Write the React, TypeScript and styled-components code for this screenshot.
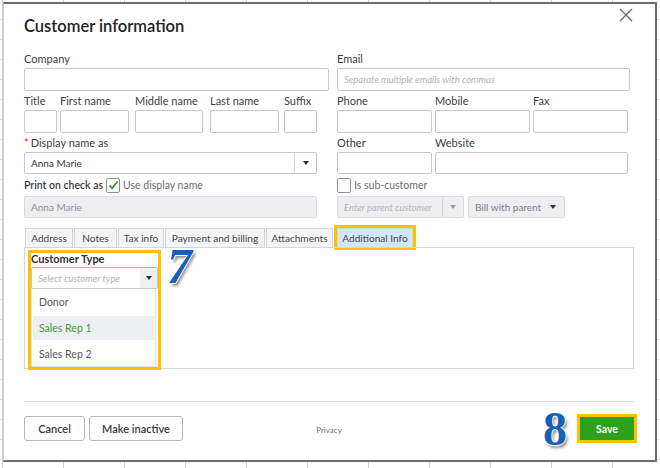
import React from 'react';
import styled, { createGlobalStyle } from 'styled-components';

const GlobalStyle = createGlobalStyle`
  html, body { margin: 0; padding: 0; }
  body {
    width: 660px;
    height: 468px;
    overflow: hidden;
    font-family: Lato, "Open Sans", sans-serif;
    background-color: #fff;
    background-image:
      repeating-linear-gradient(90deg, transparent 0, transparent 2px, #cfcfcf 2px, #cfcfcf 3px, transparent 3px, transparent 61px),
      repeating-linear-gradient(180deg, transparent 0, transparent 19px, #e0e0e0 19px, #e0e0e0 20px, transparent 20px, transparent 20px);
  }
`;

const Dialog = styled.div`
  box-sizing: border-box;
  width: 654px;
  height: 460px;
  margin: 2px 0 0 3px;
  background: #fff;
  border: 2px solid #6d6d6d;
  border-left: 1px solid #d0d0d0;
  padding: 4px 21px 0 20px;
  display: flex;
  flex-direction: column;
  color: #393a3d;
`;

const Header = styled.div`
  display: flex;
  justify-content: space-between;
  align-items: flex-start;
`;

const Title = styled.h1`
  margin: 7px 0 0;
  font-size: 16.5px;
  line-height: 22px;
  font-weight: 600;
  color: #222;
`;

const CloseButton = styled.button`
  width: 14px;
  height: 14px;
  padding: 0;
  margin-right: 1px;
  border: none;
  background: none;
  display: flex;
`;

const FormGrid = styled.div`
  display: grid;
  grid-template-columns: 305px 297px;
  column-gap: 8px;
  row-gap: 2px;
  margin-top: 14px;
`;

const Field = styled.div<{ $w: number }>`
  display: flex;
  flex-direction: column;
  width: ${p => p.$w}px;
`;

const FieldRow = styled.div<{ $gap?: number }>`
  display: flex;
  gap: ${p => p.$gap ?? 0}px;
`;

const NameRow = styled.div`
  display: grid;
  grid-template-columns: 36px 75px 75px 74px 33px;
`;

const Label = styled.label`
  font-size: 11px;
  line-height: 16px;
  height: 16px;
  margin-bottom: 1px;
  color: #404040;
  white-space: nowrap;
`;

const Required = styled.span`
  color: #d52b1e;
  margin-right: 2px;
`;

const Input = styled.div<{ $h?: number; $disabled?: boolean }>`
  box-sizing: border-box;
  height: ${p => p.$h ?? 23}px;
  border: 1px solid ${p => (p.$disabled ? '#d9dbde' : '#c6c8cc')};
  border-radius: 2px;
  background: ${p => (p.$disabled ? '#eceef1' : '#fff')};
  display: flex;
  align-items: center;
  padding-left: 6px;
  font-size: 10px;
  color: ${p => (p.$disabled ? '#8d9096' : '#393a3d')};
  overflow: hidden;
  white-space: nowrap;
`;

const Placeholder = styled.span<{ $size?: number }>`
  font-style: italic;
  color: #b0b2b6;
  font-size: ${p => p.$size ?? 9.5}px;
  flex: 1;
  overflow: hidden;
`;

const SelectBox = styled.div<{ $w: number; $disabled?: boolean; $focus?: boolean }>`
  box-sizing: border-box;
  width: ${p => p.$w}px;
  height: ${p => (p.$focus ? 23 : 22)}px;
  display: flex;
  align-items: stretch;
  border: 1px solid ${p => (p.$disabled ? '#d9dbde' : '#c6c8cc')};
  border-top-color: ${p => (p.$focus ? '#8fd18a' : p.$disabled ? '#d9dbde' : '#c6c8cc')};
  border-radius: 2px;
  background: ${p => (p.$disabled ? '#eceef1' : '#fff')};
  font-size: 10px;
  color: ${p => (p.$disabled ? '#7d8086' : '#393a3d')};
`;

const SelectValue = styled.div`
  flex: 1;
  display: flex;
  align-items: center;
  padding-left: 6px;
  overflow: hidden;
  white-space: nowrap;
`;

const ArrowCell = styled.div<{ $w: number; $divider?: boolean; $shade?: boolean }>`
  width: ${p => p.$w}px;
  display: flex;
  align-items: center;
  justify-content: center;
  border-left: ${p => (p.$divider ? '1px solid #d6d8dc' : 'none')};
  background: ${p => (p.$shade ? '#efeff0' : 'transparent')};
`;

const Caret = styled.span<{ $light?: boolean }>`
  width: 0;
  height: 0;
  border-left: 3.5px solid transparent;
  border-right: 3.5px solid transparent;
  border-top: 4px solid ${p => (p.$light ? '#9a9ca1' : '#2d2e31')};
`;

const CheckRow = styled.div`
  display: flex;
  align-items: center;
  gap: 3px;
  height: 18px;
  font-size: 10.5px;
  white-space: nowrap;
`;

const CheckLabel = styled.span<{ $strong?: boolean }>`
  color: ${p => (p.$strong ? '#393a3d' : '#6b6c72')};
  font-weight: ${p => (p.$strong ? 600 : 400)};
`;

const Checkbox = styled.span`
  box-sizing: border-box;
  width: 14px;
  height: 15px;
  border: 1px solid #8d9096;
  border-radius: 2px;
  background: #fff;
  display: flex;
  align-items: center;
  justify-content: center;
`;

const Tabs = styled.div`
  display: flex;
  align-items: flex-end;
  gap: 1px;
  margin-top: 10px;
  padding-left: 1px;
`;

const Tab = styled.div<{ $w: number; $active?: boolean }>`
  box-sizing: border-box;
  width: ${p => p.$w}px;
  height: 19px;
  display: flex;
  align-items: center;
  justify-content: center;
  border: 1px solid #d4d6da;
  border-bottom: none;
  background: ${p => (p.$active ? '#d3e6fa' : '#f3f4f6')};
  font-size: 10.1px;
  color: #45474b;
  white-space: nowrap;
  overflow: hidden;
  outline: ${p => (p.$active ? '3px solid #ffc000' : 'none')};
  margin-left: ${p => (p.$active ? 3 : 0)}px;
`;

const Panel = styled.div`
  box-sizing: border-box;
  height: 122px;
  flex-shrink: 0;
  border: 1px solid #d4d6da;
  display: flex;
  align-items: flex-start;
  padding: 2px 0 0 3px;
`;

const TypeBox = styled.div`
  box-sizing: border-box;
  width: 133px;
  height: 120px;
  border: 3px solid #ffc000;
  display: flex;
  flex-direction: column;
`;

const TypeLabel = styled.div`
  font-size: 11px;
  font-weight: 700;
  line-height: 12px;
  margin-bottom: 2px;
  color: #333;
`;

const OptionList = styled.div`
  box-sizing: border-box;
  width: 125px;
  display: flex;
  flex-direction: column;
  gap: 2px;
  padding: 1px 1px 0;
  border: 1px solid #e1e2e5;
  border-top: none;
`;

const Option = styled.div<{ $hover?: boolean }>`
  height: 24px;
  display: flex;
  align-items: center;
  padding-left: 6px;
  font-size: 10.5px;
  color: ${p => (p.$hover ? '#3c9a2f' : '#55575c')};
  background: ${p => (p.$hover ? '#eceef1' : 'transparent')};
`;

const StepNumber = styled.span<{ $italic?: boolean }>`
  font-family: "Liberation Serif", "DejaVu Serif", serif;
  font-weight: 700;
  font-style: ${p => (p.$italic ? 'italic' : 'normal')};
  font-size: ${p => (p.$italic ? 50 : 48)}px;
  line-height: ${p => (p.$italic ? '36px' : '25px')};
  height: ${p => (p.$italic ? 36 : 25)}px;
  margin: ${p => (p.$italic ? '-2px 0 0 6px' : '0')};
  color: #1760b3;
  text-shadow: 1px 0 0 #fff, -1px 0 0 #fff, 0 1px 0 #fff, 0 -1px 0 #fff, 2px 3px 3px rgba(0, 0, 0, 0.45);
`;

const Footer = styled.div`
  margin-top: 32px;
  border-top: 1px solid #dcdde0;
  padding-top: 14px;
  display: grid;
  grid-template-columns: 1fr auto 1fr;
  align-items: center;
`;

const ButtonGroup = styled.div<{ $end?: boolean }>`
  display: flex;
  align-items: center;
  gap: 4px;
  justify-content: ${p => (p.$end ? 'flex-end' : 'flex-start')};
`;

const Button = styled.button<{ $w: number }>`
  box-sizing: border-box;
  width: ${p => p.$w}px;
  height: 25px;
  border: 1px solid #b5b7bb;
  border-radius: 3px;
  background: #fff;
  font-family: inherit;
  font-size: 11px;
  font-weight: 600;
  color: #393a3d;
  padding: 0;
`;

const SaveButton = styled.button`
  width: 54px;
  height: 23px;
  border: none;
  background: #2ca01c;
  color: #fff;
  font-family: inherit;
  font-size: 10.5px;
  font-weight: 700;
  outline: 3px solid #ffc000;
  margin-left: 9px;
  padding: 0;
`;

const Privacy = styled.span`
  font-size: 8px;
  color: #6b6c72;
  margin-top: 3px;
`;

const CheckMark = () => (
  <svg width="11" height="10" viewBox="0 0 11 10">
    <path d="M1.5 5.5 L4.2 8.2 L9.5 1.5" fill="none" stroke="#2ca01c" strokeWidth="1.8" />
  </svg>
);

const nameFields: [string, number][] = [
  ['Title', 33],
  ['First name', 69],
  ['Middle name', 68],
  ['Last name', 69],
  ['Suffix', 33],
];

const tabs: [string, number][] = [
  ['Address', 48],
  ['Notes', 43],
  ['Tax info', 46],
  ['Payment and billing', 100],
  ['Attachments', 67],
];

export default function App() {
  return (
    <>
      <GlobalStyle />
      <Dialog>
        <Header>
          <Title>Customer information</Title>
          <CloseButton aria-label="Close">
            <svg width="14" height="14" viewBox="0 0 14 14">
              <path d="M1 1 L13 13 M13 1 L1 13" stroke="#6b6c72" strokeWidth="1.4" />
            </svg>
          </CloseButton>
        </Header>

        <FormGrid>
          <Field $w={305}>
            <Label>Company</Label>
            <Input />
          </Field>
          <Field $w={293}>
            <Label>Email</Label>
            <Input>
              <Placeholder>Separate multiple emails with commas</Placeholder>
            </Input>
          </Field>

          <NameRow>
            {nameFields.map(([label, w]) => (
              <Field key={label} $w={w}>
                <Label>{label}</Label>
                <Input />
              </Field>
            ))}
          </NameRow>
          <FieldRow $gap={3}>
            {['Phone', 'Mobile', 'Fax'].map(label => (
              <Field key={label} $w={95}>
                <Label>{label}</Label>
                <Input />
              </Field>
            ))}
          </FieldRow>

          <Field $w={293}>
            <Label>
              <Required>*</Required>Display name as
            </Label>
            <SelectBox $w={293}>
              <SelectValue>Anna Marie</SelectValue>
              <ArrowCell $w={21} $divider>
                <Caret />
              </ArrowCell>
            </SelectBox>
          </Field>
          <FieldRow $gap={3}>
            <Field $w={95}>
              <Label>Other</Label>
              <Input $h={22} />
            </Field>
            <Field $w={193}>
              <Label>Website</Label>
              <Input $h={22} />
            </Field>
          </FieldRow>

          <CheckRow>
            <CheckLabel $strong>Print on check as</CheckLabel>
            <Checkbox>
              <CheckMark />
            </Checkbox>
            <CheckLabel>Use display name</CheckLabel>
          </CheckRow>
          <CheckRow>
            <Checkbox />
            <CheckLabel>Is sub-customer</CheckLabel>
          </CheckRow>

          <Field $w={293}>
            <Input $h={22} $disabled>Anna Marie</Input>
          </Field>
          <FieldRow $gap={4}>
            <SelectBox $w={127} $disabled>
              <SelectValue>
                <Placeholder $size={9.5}>Enter parent customer</Placeholder>
              </SelectValue>
              <ArrowCell $w={20} $divider>
                <Caret $light />
              </ArrowCell>
            </SelectBox>
            <SelectBox $w={97} $disabled>
              <SelectValue>Bill with parent</SelectValue>
              <ArrowCell $w={22}>
                <Caret />
              </ArrowCell>
            </SelectBox>
          </FieldRow>
        </FormGrid>

        <Tabs>
          {tabs.map(([t, w]) => (
            <Tab key={t} $w={w}>{t}</Tab>
          ))}
          <Tab $w={76} $active>Additional Info</Tab>
        </Tabs>
        <Panel>
          <TypeBox>
            <TypeLabel>Customer Type</TypeLabel>
            <SelectBox $w={127} $focus>
              <SelectValue>
                <Placeholder>Select customer type</Placeholder>
              </SelectValue>
              <ArrowCell $w={17} $shade>
                <Caret />
              </ArrowCell>
            </SelectBox>
            <OptionList>
              <Option>Donor</Option>
              <Option $hover>Sales Rep 1</Option>
              <Option>Sales Rep 2</Option>
            </OptionList>
          </TypeBox>
          <StepNumber $italic>7</StepNumber>
        </Panel>

        <Footer>
          <ButtonGroup>
            <Button $w={61}>Cancel</Button>
            <Button $w={94}>Make inactive</Button>
          </ButtonGroup>
          <Privacy>Privacy</Privacy>
          <ButtonGroup $end>
            <StepNumber>8</StepNumber>
            <SaveButton>Save</SaveButton>
          </ButtonGroup>
        </Footer>
      </Dialog>
    </>
  );
}
